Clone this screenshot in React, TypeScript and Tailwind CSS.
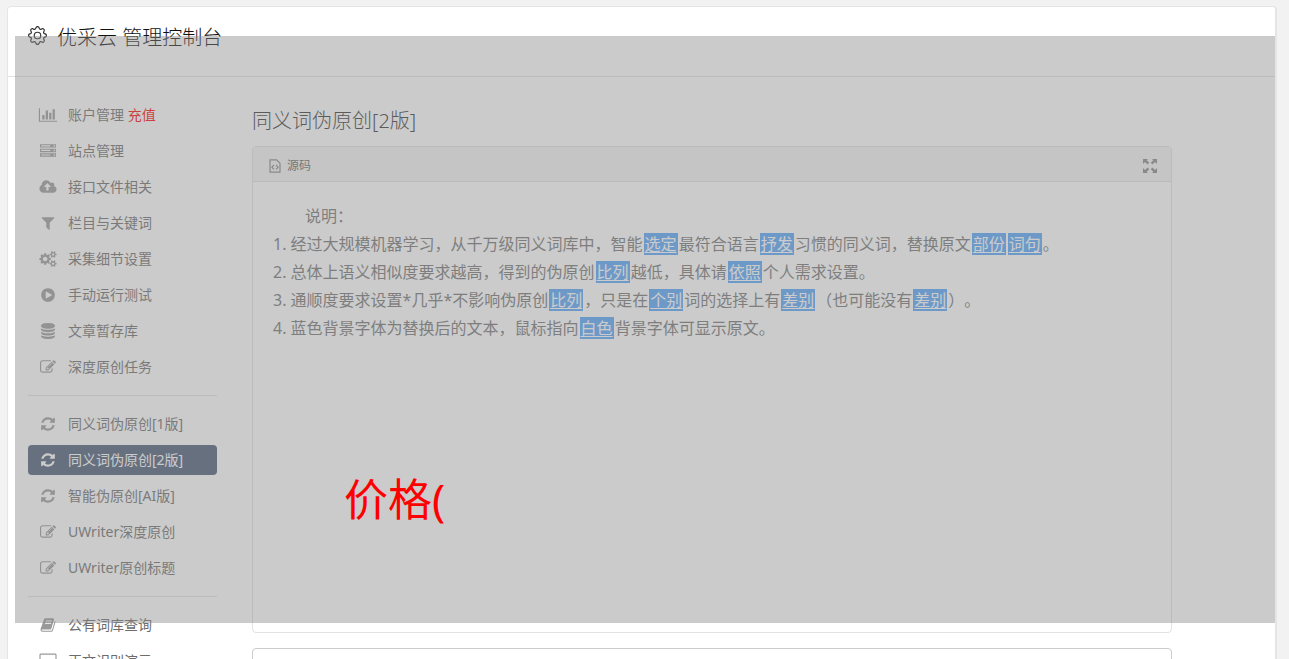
import { ReactNode } from 'react';
import { BsGear } from 'react-icons/bs';
import { clsx } from 'clsx';

type IconName =
  | 'chart'
  | 'server'
  | 'cloud'
  | 'filter'
  | 'gears'
  | 'play'
  | 'database'
  | 'edit'
  | 'refresh'
  | 'book'
  | 'desktop';

interface MenuItem {
  icon: IconName;
  label: string;
  badge?: string;
  active?: boolean;
}

const ICONS: Record<IconName, { width: number; d: string }> = {
  chart: {
    width: 2048,
    d: 'M640 896v512h-256v-512h256zm384-512v1024h-256v-1024h256zm1024 1152v128h-2048v-1536h128v1408h1920zm-640-896v768h-256v-768h256zm384-384v1152h-256v-1152h256z',
  },
  server: {
    width: 1792,
    d: 'M128 1408h1024v-128h-1024v128zm0-512h1024v-128h-1024v128zm1568 448q0-40-28-68t-68-28-68 28-28 68 28 68 68 28 68-28 28-68zm-1568-960h1024v-128h-1024v128zm1568 448q0-40-28-68t-68-28-68 28-28 68 28 68 68 28 68-28 28-68zm0-512q0-40-28-68t-68-28-68 28-28 68 28 68 68 28 68-28 28-68zm96 832v384h-1792v-384h1792zm0-512v384h-1792v-384h1792zm0-512v384h-1792v-384h1792z',
  },
  cloud: {
    width: 1920,
    d: 'M1280 864q0-14-9-23l-352-352q-9-9-23-9t-23 9l-351 351q-10 12-10 24 0 14 9 23t23 9h224v352q0 13 9.5 22.5t22.5 9.5h192q13 0 22.5-9.5t9.5-22.5v-352h224q13 0 22.5-9.5t9.5-22.5zm640 288q0 159-112.5 271.5t-271.5 112.5h-1088q-185 0-316.5-131.5t-131.5-316.5q0-130 70-240t188-165q-2-30-2-43 0-212 150-362t362-150q156 0 285.5 87t188.5 231q71-62 166-62 106 0 181 75t75 181q0 76-41 138 130 31 213.5 135.5t83.5 238.5z',
  },
  filter: {
    width: 1792,
    d: 'M1595 295q17 41-14 70l-493 493v742q0 42-39 59-13 5-25 5-27 0-45-19l-256-256q-19-19-19-45v-486l-493-493q-31-29-14-70 17-39 59-39h1280q42 0 59 39z',
  },
  gears: {
    width: 1920,
    d: 'M896 896q0-106-75-181t-181-75-181 75-75 181 75 181 181 75 181-75 75-181zm768 512q0-52-38-90t-90-38-90 38-38 90q0 53 37.5 90.5t90.5 37.5 90.5-37.5 37.5-90.5zm0-1024q0-52-38-90t-90-38-90 38-38 90q0 53 37.5 90.5t90.5 37.5 90.5-37.5 37.5-90.5zm-384 421v185q0 10-7 19.5t-16 10.5l-155 24q-11 35-32 76 34 48 90 115 7 11 7 20 0 12-7 19-23 30-82.5 89.5t-78.5 59.5q-11 0-21-7l-115-90q-37 19-77 31-11 108-23 155-7 24-30 24h-186q-11 0-20-7.5t-10-17.5l-23-153q-34-10-75-31l-118 89q-7 7-20 7-11 0-21-8-144-133-144-160 0-9 7-19 10-14 41-53t47-61q-23-44-35-82l-152-24q-10-1-17-9.5t-7-19.5v-185q0-10 7-19.5t16-10.5l155-24q11-35 32-76-34-48-90-115-7-11-7-20 0-12 7-20 22-30 82-89t79-59q11 0 21 7l115 90q34-18 77-32 11-108 23-154 7-24 30-24h186q11 0 20 7.5t10 17.5l23 153q34 10 75 31l118-89q8-7 20-7 11 0 21 8 144 133 144 160 0 8-7 19-12 16-42 54t-45 60q23 48 34 82l152 23q10 2 17 10.5t7 19.5zm640 533v140q0 16-149 31-12 27-30 52 51 113 51 138 0 4-4 7-122 71-124 71-8 0-46-47t-52-68q-20 2-30 2t-30-2q-14 21-52 68t-46 47q-2 0-124-71-4-3-4-7 0-25 51-138-18-25-30-52-149-15-149-31v-140q0-16 149-31 13-29 30-52-51-113-51-138 0-4 4-7 4-2 35-20t59-34 30-16q8 0 46 46.5t52 67.5q20-2 30-2t30 2q51-71 92-112l6-2q4 0 124 70 4 3 4 7 0 25-51 138 17 23 30 52 149 15 149 31zm0-1024v140q0 16-149 31-12 27-30 52 51 113 51 138 0 4-4 7-122 71-124 71-8 0-46-47t-52-68q-20 2-30 2t-30-2q-14 21-52 68t-46 47q-2 0-124-71-4-3-4-7 0-25 51-138-18-25-30-52-149-15-149-31v-140q0-16 149-31 13-29 30-52-51-113-51-138 0-4 4-7 4-2 35-20t59-34 30-16q8 0 46 46.5t52 67.5q20-2 30-2t30 2q51-71 92-112l6-2q4 0 124 70 4 3 4 7 0 25-51 138 17 23 30 52 149 15 149 31z',
  },
  play: {
    width: 1792,
    d: 'M896 128q209 0 385.5 103t279.5 279.5 103 385.5-103 385.5-279.5 279.5-385.5 103-385.5-103-279.5-279.5-103-385.5 103-385.5 279.5-279.5 385.5-103zm384 823q32-18 32-55t-32-55l-544-320q-31-19-64-1-32 19-32 56v640q0 37 32 56 16 8 32 8 17 0 32-9z',
  },
  database: {
    width: 1792,
    d: 'M896 768q237 0 443-43t325-127v170q0 69-103 128t-280 93.5-385 34.5-385-34.5-280-93.5-103-128v-170q119 84 325 127t443 43zm0 768q237 0 443-43t325-127v170q0 69-103 128t-280 93.5-385 34.5-385-34.5-280-93.5-103-128v-170q119 84 325 127t443 43zm0-384q237 0 443-43t325-127v170q0 69-103 128t-280 93.5-385 34.5-385-34.5-280-93.5-103-128v-170q119 84 325 127t443 43zm0-1152q208 0 385 34.5t280 93.5 103 128v128q0 69-103 128t-280 93.5-385 34.5-385-34.5-280-93.5-103-128v-128q0-69 103-128t280-93.5 385-34.5z',
  },
  edit: {
    width: 1792,
    d: 'M888 1184l116-116-152-152-116 116v56h96v96h56zm440-720q-16-16-33 1l-350 350q-17 17-1 33t33-1l350-350q17-17 1-33zm80 594v190q0 119-84.5 203.5t-203.5 84.5h-832q-119 0-203.5-84.5t-84.5-203.5v-832q0-119 84.5-203.5t203.5-84.5h832q63 0 117 25 15 7 18 23 3 17-9 29l-49 49q-14 14-32 8-23-6-45-6h-832q-66 0-113 47t-47 113v832q0 66 47 113t113 47h832q66 0 113-47t47-113v-126q0-13 9-22l64-64q15-15 35-7t20 29zm-96-738l288 288-672 672h-288v-288zm444 132l-92 92-288-288 92-92q28-28 68-28t68 28l152 152q28 28 28 68t-28 68z',
  },
  refresh: {
    width: 1792,
    d: 'M1639 1056q0 5-1 7-64 268-268 434.5t-478 166.5q-146 0-282.5-55t-243.5-157l-129 129q-19 19-45 19t-45-19-19-45v-448q0-26 19-45t45-19h448q26 0 45 19t19 45-19 45l-137 137q71 66 161 102t187 36q134 0 250-65t186-179q11-17 53-117 8-23 30-23h192q13 0 22.5 9.5t9.5 22.5zm25-800v448q0 26-19 45t-45 19h-448q-26 0-45-19t-19-45 19-45l138-138q-148-137-349-137-134 0-250 65t-186 179q-11 17-53 117-8 23-30 23h-199q-13 0-22.5-9.5t-9.5-22.5v-7q65-268 270-434.5t480-166.5q146 0 284 55.5t245 156.5l130-129q19-19 45-19t45 19 19 45z',
  },
  book: {
    width: 1792,
    d: 'M1703 478q40 57 18 129l-275 906q-19 64-76.5 107.5t-122.5 43.5h-923q-77 0-148.5-53.5t-99.5-131.5q-24-67-2-127 0-4 3-27t4-37q1-8-3-21.5t-3-19.5q2-11 8-21t16.5-23.5 16.5-23.5q23-38 45-91.5t30-91.5q3-10 .5-30t-.5-28q3-11 17-28t17-23q21-36 42-92t25-90q1-9-2.5-32t.5-28q4-13 22-30.5t22-22.5q19-26 42.5-84.5t27.5-96.5q1-8-3-25.5t-2-26.5q2-8 9-18t18-23 17-21q8-12 16.5-30.5t15-35 16-36 19.5-32 26.5-23.5 36-11.5 47.5 5.5l-1 3q38-9 51-9h761q74 0 114 56t18 130l-274 906q-36 119-71.5 153.5t-128.5 34.5h-869q-27 0-38 15-11 16-1 43 24 70 144 70h923q29 0 56-15.5t35-41.5l300-987q7-22 5-57 38 15 59 43zm-1064 2q-4 13 2 22.5t20 9.5h608q13 0 25.5-9.5t16.5-22.5l21-64q4-13-2-22.5t-20-9.5h-608q-13 0-25.5 9.5t-16.5 22.5zm-83 256q-4 13 2 22.5t20 9.5h608q13 0 25.5-9.5t16.5-22.5l21-64q4-13-2-22.5t-20-9.5h-608q-13 0-25.5 9.5t-16.5 22.5z',
  },
  desktop: {
    width: 1920,
    d: 'M1792 1056v-832q0-32-32-32h-1600q-32 0-32 32v832q0 32 32 32h1600q32 0 32-32zm128-832v1088q0 64-160 96h-544v256h-512v-256h-544q-160-32-160-96v-1088q0-160 160-160h1600q160 0 160 160z',
  },
};

const MENU: MenuItem[][] = [
  [
    { icon: 'chart', label: '账户管理', badge: '充值' },
    { icon: 'server', label: '站点管理' },
    { icon: 'cloud', label: '接口文件相关' },
    { icon: 'filter', label: '栏目与关键词' },
    { icon: 'gears', label: '采集细节设置' },
    { icon: 'play', label: '手动运行测试' },
    { icon: 'database', label: '文章暂存库' },
    { icon: 'edit', label: '深度原创任务' },
  ],
  [
    { icon: 'refresh', label: '同义词伪原创[1版]' },
    { icon: 'refresh', label: '同义词伪原创[2版]', active: true },
    { icon: 'refresh', label: '智能伪原创[AI版]' },
    { icon: 'edit', label: 'UWriter深度原创' },
    { icon: 'edit', label: 'UWriter原创标题' },
  ],
  [
    { icon: 'book', label: '公有词库查询' },
    { icon: 'desktop', label: '正文识别演示' },
  ],
];

function MenuIcon({ name }: { name: IconName }) {
  const icon = ICONS[name];
  return (
    <svg className="h-4 w-5 shrink-0" viewBox={`0 0 ${icon.width} 1792`} fill="currentColor" fillRule="evenodd" aria-hidden="true">
      <path d={icon.d} />
    </svg>
  );
}

function SourceIcon() {
  return (
    <svg className="h-[14px] w-3" viewBox="0 0 12 14" fill="none" stroke="currentColor" aria-hidden="true">
      <path d="M1 .8h6.5L11 4.3v8.9H1z" strokeWidth="1.2" />
      <path d="M5 6 2.9 8.2 5 10.4M7 6l2.1 2.2L7 10.4" strokeWidth="1.2" />
    </svg>
  );
}

function ExpandIcon() {
  return (
    <svg className="h-[14px] w-[14px]" viewBox="0 0 14 14" fill="currentColor" aria-hidden="true">
      <path d="M0 0h5L3.7 1.3l2.5 2.5-1.6 1.6L2 3.1 0 5zM14 0v5l-2-1.9-2.6 2.3-1.6-1.6 2.5-2.5L9 0zM0 14V9l2 1.9 2.6-2.3 1.6 1.6-2.5 2.5L5 14zM14 14H9l1.3-1.3-2.5-2.5 1.6-1.6 2.6 2.3L14 9z" />
    </svg>
  );
}

function Mark({ children }: { children: ReactNode }) {
  return (
    <span className="mx-px bg-[#55a5f9] px-px text-white underline underline-offset-2">
      {children}
    </span>
  );
}

function Sidebar() {
  return (
    <nav className="w-[189px] shrink-0 pt-[23px]">
      {MENU.map((group, index) => (
        <ul
          key={index}
          className={clsx('flex flex-col gap-[6px]', index > 0 && 'mt-[13px] border-t border-[#e2e2e2] pt-[13px]')}
        >
          {group.map(item => (
            <li key={item.label}>
              <a
                href="#"
                className={clsx(
                  'flex h-[30px] items-center gap-[10px] rounded pl-[10px] text-sm',
                  item.active ? 'bg-[#475976] text-white' : 'text-[#6c6c6c]'
                )}
              >
                <span className={item.active ? 'text-white' : 'text-[#999]'}>
                  <MenuIcon name={item.icon} />
                </span>
                <span>
                  {item.label}
                  {item.badge && <span className="text-[#f00]"> {item.badge}</span>}
                </span>
              </a>
            </li>
          ))}
        </ul>
      ))}
    </nav>
  );
}

function SourcePanel() {
  return (
    <section className="flex min-h-[487px] flex-col rounded border border-[#e2e2e2]">
      <div className="flex h-[35px] items-center justify-between border-b border-[#e2e2e2] bg-[#f5f5f5] px-4 pt-[3px]">
        <div className="flex items-center gap-[6px] text-xs text-[#666]">
          <span className="text-[#888]">
            <SourceIcon />
          </span>
          源码
        </div>
        <button type="button" aria-label="全屏" className="mr-[-2px] text-[#888]">
          <ExpandIcon />
        </button>
      </div>
      <div className="px-5 py-5 text-base leading-7 text-[#747474] [text-spacing-trim:space-all]">
        <p className="indent-8">说明：</p>
        <ol>
          <li>
            1. 经过大规模机器学习，从千万级同义词库中，智能<Mark>选定</Mark>最符合语言<Mark>抒发</Mark>习惯的同义词，替换原文<Mark>部份</Mark><Mark>词句</Mark>。
          </li>
          <li>
            2. 总体上语义相似度要求越高，得到的伪原创<Mark>比列</Mark>越低，具体请<Mark>依照</Mark>个人需求设置。
          </li>
          <li>
            3. 通顺度要求设置*几乎*不影响伪原创<Mark>比列</Mark>，只是在<Mark>个别</Mark>词的选择上有<Mark>差别</Mark>（也可能没有<Mark>差别</Mark>）。
          </li>
          <li>
            4. 蓝色背景字体为替换后的文本，鼠标指向<Mark>白色</Mark>背景字体可显示原文。
          </li>
        </ol>
      </div>
    </section>
  );
}

export default function App() {
  return (
    <div className="relative h-screen overflow-hidden bg-[#f2f2f2] pt-[6px] pr-3 pl-[7px] font-['Noto_Sans','Noto_Sans_CJK_SC',sans-serif] font-normal">
      <div className="rounded border border-r-2 border-[#e5e5e5] bg-white">
        <header className="flex h-[70px] items-start gap-[10px] border-b border-[#e2e2e2] pt-4 pl-5">
          <BsGear className="mt-[3px] h-[19px] w-[19px] text-[#333]" />
          <h1 className="text-xl leading-[30px] font-light text-[#111]">优采云 管理控制台</h1>
        </header>
        <div className="flex gap-[35px] pr-[103px] pl-5">
          <Sidebar />
          <main className="flex min-w-0 flex-1 flex-col pt-[29px]">
            <h2 className="mb-[10px] text-xl leading-[30px] font-light text-[#333]">同义词伪原创[2版]</h2>
            <SourcePanel />
            <textarea aria-label="原文" className="mt-[15px] h-40 w-full rounded border border-[#ccc] bg-white" />
          </main>
        </div>
      </div>

      <div className="absolute top-9 right-[14px] left-[15px] h-[587px] bg-[#8c8c8c]/45">
        <p className="mt-[430px] ml-[329px] text-[44px] leading-[66px] text-[#f00]">价格(</p>
      </div>
    </div>
  );
}
